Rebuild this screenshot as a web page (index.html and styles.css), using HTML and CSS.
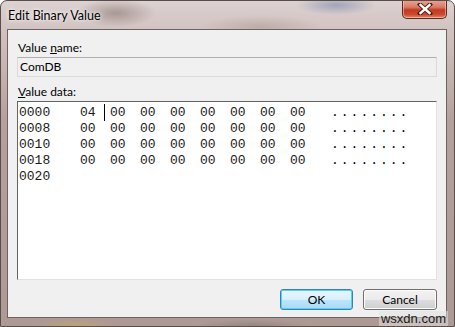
FILE: index.html
```html
<!DOCTYPE html>
<html>
<head>
<meta charset="utf-8">
<link rel="stylesheet" href="styles.css">
</head>
<body>
<div class="window">
  <div class="titlebar">
    <span class="title">Edit Binary Value</span>
    <div class="close">
      <svg width="16" height="12" viewBox="0 0 16 12">
        <path d="M3 1.5 L13 10.5 M13 1.5 L3 10.5" stroke="#4a1a14" stroke-width="4.2" stroke-linecap="square"/>
        <path d="M3.5 2 L12.5 10 M12.5 2 L3.5 10" stroke="#ffffff" stroke-width="2.4" stroke-linecap="square"/>
      </svg>
    </div>
  </div>
  <div class="client">
    <div class="lbl">Value <u>n</u>ame:</div>
    <div class="namebox">ComDB</div>
    <div class="lbl lbl2"><u>V</u>alue data:</div>
    <div class="databox">
      <div class="row"><span class="off">0000</span><span class="b">04<i class="caret"></i></span><span class="b">00</span><span class="b">00</span><span class="b">00</span><span class="b">00</span><span class="b">00</span><span class="b">00</span><span class="b">00</span><span class="dots">........</span></div>
      <div class="row"><span class="off">0008</span><span class="b">00</span><span class="b">00</span><span class="b">00</span><span class="b">00</span><span class="b">00</span><span class="b">00</span><span class="b">00</span><span class="b">00</span><span class="dots">........</span></div>
      <div class="row"><span class="off">0010</span><span class="b">00</span><span class="b">00</span><span class="b">00</span><span class="b">00</span><span class="b">00</span><span class="b">00</span><span class="b">00</span><span class="b">00</span><span class="dots">........</span></div>
      <div class="row"><span class="off">0018</span><span class="b">00</span><span class="b">00</span><span class="b">00</span><span class="b">00</span><span class="b">00</span><span class="b">00</span><span class="b">00</span><span class="b">00</span><span class="dots">........</span></div>
      <div class="row"><span class="off">0020</span></div>
    </div>
    <div class="buttons">
      <button class="btn ok">OK</button>
      <button class="btn">Cancel</button>
    </div>
  </div>
  <div class="wm">wsxdn.com</div>
</div>
</body>
</html>
```

FILE: styles.css
```css
html, body {
  margin: 0;
  padding: 0;
  background: #ffffff;
}
.window {
  position: relative;
  width: 455px;
  height: 327px;
  box-sizing: border-box;
  display: flex;
  flex-direction: column;
  border: 1px solid #5a4c48;
  border-radius: 7px 7px 0 0;
  background:
    radial-gradient(ellipse 40px 14px at 115px 12px, rgba(130,110,105,0.55), rgba(130,110,105,0) 100%),
    radial-gradient(ellipse 40px 10px at 335px 4px, rgba(90,110,160,0.45), rgba(90,110,160,0) 100%),
    radial-gradient(ellipse 60px 12px at 260px 26px, rgba(150,130,120,0.35), rgba(150,130,120,0) 100%),
    radial-gradient(ellipse 40px 8px at 75px 326px, rgba(200,170,90,0.6), rgba(200,170,90,0) 100%),
    radial-gradient(ellipse 60px 8px at 250px 326px, rgba(90,90,90,0.35), rgba(90,90,90,0) 100%),
    linear-gradient(180deg, #dcd2d1 0px, #d1c3c1 28px, #b5a19b 120px, #ae9a94 320px);
  font-family: Lato, "Open Sans", sans-serif;
  font-size: 12px;
  color: #000;
  overflow: hidden;
}
.titlebar {
  height: 28px;
  flex: none;
  display: flex;
  align-items: flex-start;
  justify-content: space-between;
}
.title {
  margin: 7px 0 0 7px;
  font-size: 12.5px;
  line-height: 16px;
  color: #000;
  text-shadow: 0 0 6px rgba(255,255,255,0.9), 0 0 3px rgba(255,255,255,0.9);
}
.close {
  width: 45px;
  height: 19px;
  margin: -1px 7px 0 0;
  box-sizing: border-box;
  border: 1px solid #5c2a22;
  border-top: none;
  border-radius: 0 0 5px 5px;
  background: linear-gradient(180deg, #e7a797 0%, #d97a66 40%, #c23a22 55%, #c9492e 80%, #e08a6a 100%);
  box-shadow: inset 0 0 0 1px rgba(255,220,210,0.5);
  display: flex;
  align-items: center;
  justify-content: center;
}
.close svg { display: block; }
.client {
  flex: none;
  height: 289px;
  box-sizing: border-box;
  margin: 0 7px 0 6px;
  border: 1px solid #6c6361;
  background: #f0f0f0;
  padding: 10px 9px 7px 9px;
  display: flex;
  flex-direction: column;
}
.lbl {
  line-height: 15px;
  height: 15px;
  padding-left: 1px;
}
.lbl2 { margin-top: 7px; }
.namebox {
  margin-top: 2px;
  height: 20px;
  box-sizing: border-box;
  border: 1px solid #dadada;
  border-top-color: #b0b0b0;
  background: #f0f0f0;
  padding: 0 0 0 2px;
  line-height: 18px;
}
.databox {
  margin-top: 2px;
  height: 180px;
  box-sizing: border-box;
  border: 1px solid #e2e2e2;
  border-top-color: #646464;
  border-left-color: #646464;
  background: #ffffff;
  padding: 3px 0 0 1px;
  font-family: "Liberation Mono", monospace;
  font-size: 13px;
  color: #1a1a1a;
}
.row {
  display: flex;
  height: 16px;
  line-height: 16px;
  white-space: pre;
}
.off { width: 61px; flex: none; }
.b { width: 30px; flex: none; position: relative; }
.caret {
  position: absolute;
  left: 24px;
  top: -1px;
  width: 1px;
  height: 17px;
  background: #000;
}
.dots {
  margin-left: 11px;
  letter-spacing: 2px;
  color: #000;
}
.buttons {
  margin-top: 9px;
  display: flex;
  justify-content: flex-end;
  gap: 10px;
}
.btn {
  width: 74px;
  height: 21px;
  box-sizing: border-box;
  border: 1px solid #707070;
  border-radius: 3px;
  background: linear-gradient(180deg, #f2f2f2 0%, #ebebeb 50%, #dddddd 51%, #cfcfcf 100%);
  box-shadow: inset 0 0 0 1px #fcfcfc;
  font-family: Lato, "Open Sans", sans-serif;
  font-size: 12px;
  color: #000;
  padding: 0;
  line-height: 18px;
}
.ok {
  width: 73px;
  border-color: #3c7fb1;
  background: linear-gradient(180deg, #eaf6fd 0%, #d9f0fc 50%, #bee6fd 51%, #a7d9f5 100%);
  box-shadow: inset 0 0 0 1px #48d7fb;
}
.wm {
  position: absolute;
  right: 6px;
  bottom: 0;
  padding: 0 2px;
  font-family: "Liberation Sans", sans-serif;
  font-size: 13px;
  line-height: 15px;
  color: #1a1a1a;
  background: rgba(225,225,225,0.55);
}
```
